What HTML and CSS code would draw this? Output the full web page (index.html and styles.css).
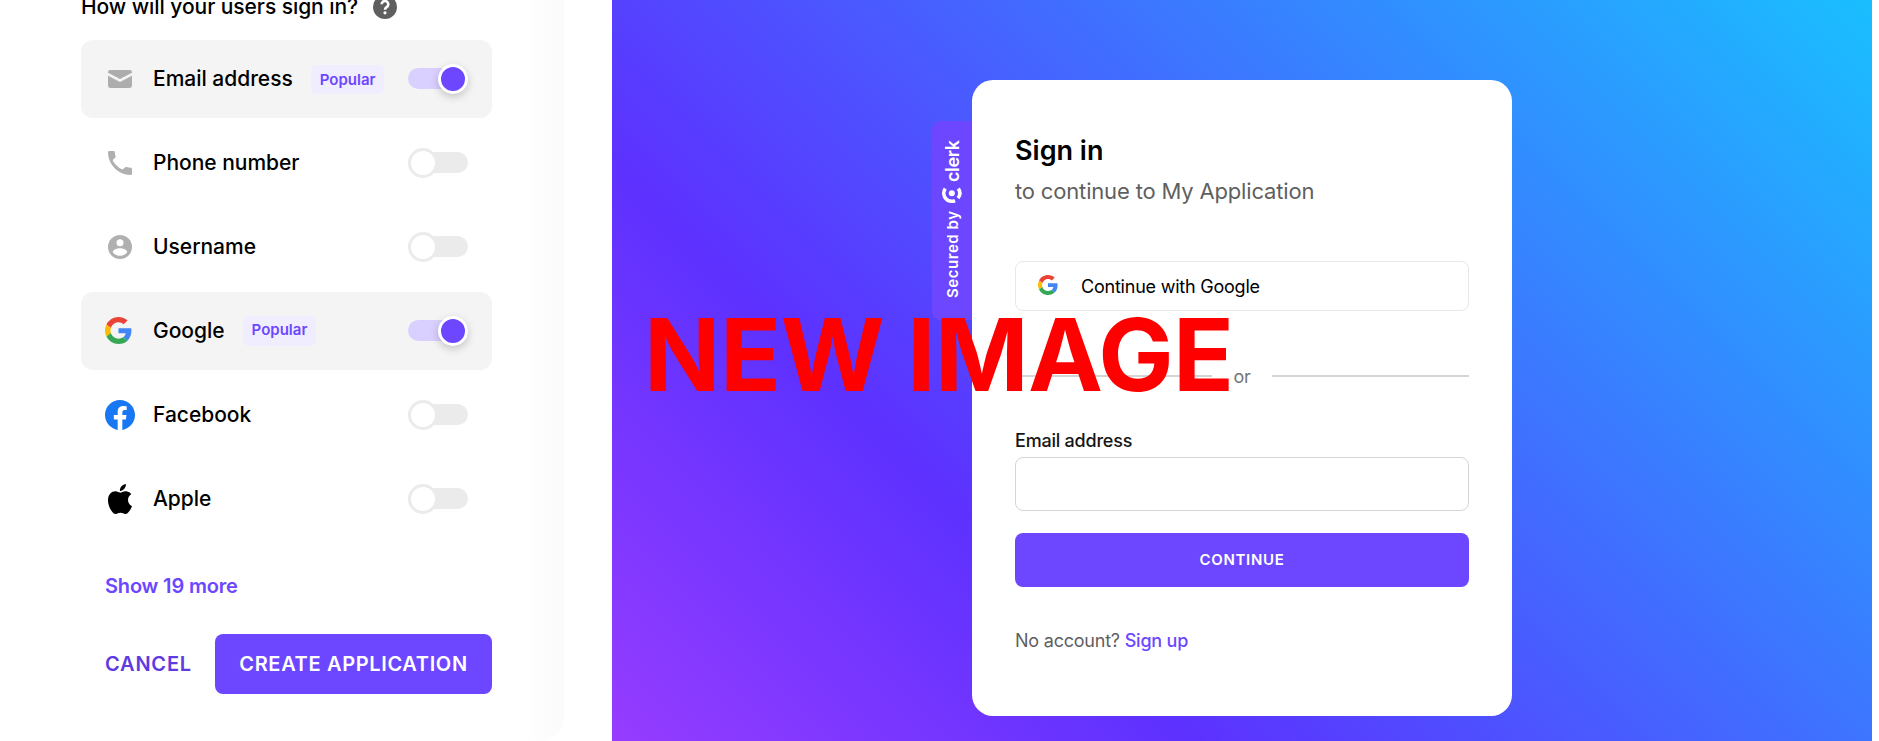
FILE: index.html
```html
<!DOCTYPE html>
<html lang="en">
<head>
<meta charset="utf-8">
<title>Create application</title>
<link rel="stylesheet" href="styles.css">
</head>
<body>
<svg width="0" height="0" class="defs">
  <symbol id="google" viewBox="0 0 48 48">
    <path fill="#EA4335" d="M24 9.5c3.54 0 6.71 1.22 9.21 3.6l6.85-6.85C35.9 2.38 30.47 0 24 0 14.62 0 6.51 5.38 2.56 13.22l7.98 6.19C12.43 13.72 17.74 9.5 24 9.5z"/>
    <path fill="#4285F4" d="M46.98 24.55c0-1.57-.15-3.09-.38-4.55H24v9.02h12.94c-.58 2.96-2.26 5.48-4.78 7.18l7.73 6c4.51-4.18 7.09-10.36 7.09-17.65z"/>
    <path fill="#FBBC05" d="M10.53 28.59c-.48-1.45-.76-2.99-.76-4.59s.27-3.14.76-4.59l-7.98-6.19C.92 16.46 0 20.12 0 24c0 3.88.92 7.54 2.56 10.78l7.97-6.19z"/>
    <path fill="#34A853" d="M24 48c6.48 0 11.93-2.13 15.89-5.81l-7.73-6c-2.15 1.45-4.92 2.3-8.16 2.3-6.26 0-11.57-4.22-13.47-9.91l-7.98 6.19C6.51 42.62 14.62 48 24 48z"/>
  </symbol>
</svg>
<main class="page">
  <section class="setup">
    <header class="question">
      <h2>How will your users sign in?</h2>
      <svg class="help" viewBox="0 0 24 24"><circle cx="12" cy="12" r="12" fill="#5f5f5f"/><path d="M8.700 9.200a3.300 3.300 0 1 1 5 2.800c-1 .7-1.700 1.100-1.700 2.700" fill="none" stroke="#fff" stroke-width="2.600"/><circle cx="12" cy="17.800" r="1.600" fill="#fff"/></svg>
    </header>
    <ul class="options">
      <li class="option on">
        <svg class="icon" viewBox="0 0 30 30" fill="#adadad"><path d="M3 8.200C3 6.900 4.100 6 5.400 6h19.200C25.900 6 27 6.900 27 8.200v.6l-12 6.200L3 8.800zM3 11.700l12 6.300 12-6.300v9.900c0 1.300-1.100 2.400-2.400 2.400H5.400C4.100 24 3 22.900 3 21.600z"/></svg>
        <span class="name">Email address</span><span class="badge">Popular</span><i class="toggle"></i>
      </li>
      <li class="option">
        <svg class="icon" viewBox="0 0 30 30" fill="#b0b0b0"><path d="M4.300 3h4.200c.7 0 1.200.5 1.300 1.200.1 1.500.3 2.700.8 4 .2.600.1 1.100-.3 1.500L7.600 12c1.700 3.900 5.800 7.900 9.900 9.600l2.800-2.300c.4-.4 1-.5 1.500-.3 1.300.4 2.600.7 4 .8.7 0 1.200.6 1.200 1.300v4.600c0 .7-.6 1.300-1.300 1.300C13.300 27 3 16.500 3 4.300 3 3.600 3.600 3 4.300 3z"/></svg>
        <span class="name">Phone number</span><i class="toggle"></i>
      </li>
      <li class="option">
        <svg class="icon" viewBox="0 0 30 30"><circle cx="15" cy="15" r="12" fill="#b0b0b0"/><circle cx="15" cy="10.800" r="3.500" fill="#fff"/><path d="M7.800 20.300c0-2.600 4.500-4 7.200-4s7.200 1.400 7.200 4c-1.500 2.200-4.200 3.500-7.200 3.500s-5.700-1.300-7.200-3.500z" fill="#fff"/></svg>
        <span class="name">Username</span><i class="toggle"></i>
      </li>
      <li class="option on">
        <svg class="icon google"><use href="#google"/></svg>
        <span class="name">Google</span><span class="badge raised">Popular</span><i class="toggle"></i>
      </li>
      <li class="option">
        <svg class="icon" viewBox="0 0 24 24" fill="#1877f2"><path d="M24 12.073c0-6.627-5.373-12-12-12s-12 5.373-12 12c0 5.990 4.388 10.954 10.125 11.854v-8.385H7.078v-3.470h3.047V9.430c0-3.007 1.792-4.669 4.533-4.669 1.312 0 2.686.235 2.686.235v2.953H15.830c-1.491 0-1.956.925-1.956 1.874v2.250h3.328l-.532 3.470h-2.796v8.385C19.612 23.027 24 18.062 24 12.073z"/></svg>
        <span class="name">Facebook</span><i class="toggle"></i>
      </li>
      <li class="option">
        <svg class="icon apple" viewBox="0 0 814 1000" preserveAspectRatio="none"><path d="M788.100 340.900c-5.800 4.500-108.200 62.200-108.200 190.500 0 148.400 130.300 200.900 134.200 202.200-.6 3.200-20.700 71.900-68.700 141.900-42.800 61.600-87.500 123.100-155.500 123.100s-85.500-39.500-164-39.500c-76.500 0-103.700 40.800-165.900 40.800s-105.600-57-155.500-127C46.700 790.700 0 663 0 541.800c0-194.400 126.400-297.500 250.800-297.500 66.100 0 121.200 43.400 162.700 43.400 39.500 0 101.100-46 176.300-46 28.500 0 130.900 2.600 198.300 99.200zm-234-181.500c31.100-36.900 53.100-88.100 53.100-139.300 0-7.100-.6-14.300-1.900-20.100-50.600 1.900-110.800 33.700-147.100 75.800-28.500 32.400-55.100 83.600-55.100 135.500 0 7.800 1.300 15.600 1.900 18.100 3.200.6 8.400 1.300 13.600 1.300 45.400 0 102.500-30.400 135.500-71.300z"/></svg>
        <span class="name">Apple</span><i class="toggle"></i>
      </li>
    </ul>
    <a class="more">Show 19 more</a>
    <footer class="actions"><a class="cancel">CANCEL</a><a class="create">CREATE APPLICATION</a></footer>
  </section>
  <section class="preview">
    <div class="secured"><span>Secured by</span><svg class="mark" viewBox="0 0 20 17"><circle cx="9.800" cy="6.300" r="3" fill="#fff"/><path d="M3.300 1.600A8 8 0 0 0 13 13.600" fill="none" stroke="#fff" stroke-width="3.600"/><path d="M16.300 1.600A8 8 0 0 1 16 11.200" fill="none" stroke="#fff" stroke-width="3.600"/></svg><span class="wordmark">clerk</span></div>
    <div class="card">
      <h1>Sign in</h1>
      <p class="sub">to continue to My Application</p>
      <div class="social"><svg class="g"><use href="#google"/></svg><span>Continue with Google</span></div>
      <div class="or"><span>or</span></div>
      <label for="email">Email address</label>
      <input id="email" class="field" type="text">
      <div class="continue">CONTINUE</div>
      <p class="signup">No account? <a>Sign up</a></p>
    </div>
    <div class="overlay">NEW IMAGE</div>
  </section>
</main>
</body>
</html>
```
FILE: styles.css
```css
*, *::before, *::after { box-sizing: border-box; }
body { margin: 0; height: 741px; overflow: hidden; background: #fff; font-family: Inter, sans-serif; color: #000; }
h1, h2, p, ul { margin: 0; padding: 0; }
.defs { position: absolute; }
.page { display: flex; height: 741px; padding-right: 7px; }

.setup { width: 564px; margin-right: 48px; padding: 0 72px 0 81px; border-bottom-right-radius: 24px; background: linear-gradient(to right, #fff 528px, #fdfdfd 540px, #fbfbfb 564px); }
.question { display: flex; align-items: center; height: 14px; margin-bottom: 26px; }
.question h2 { font-size: 21px; line-height: 28px; font-weight: 500; letter-spacing: -.06px; white-space: nowrap; }
.help { width: 24px; height: 24px; margin-left: 15px; flex: none; }
.options { display: grid; gap: 6px; list-style: none; }
.option { display: flex; align-items: center; height: 78px; padding: 0 24px; border-radius: 12px; }
.option.on { background: #f4f4f4; }
.icon { width: 30px; height: 30px; margin-right: 18px; flex: none; }
.icon.google { width: 27px; height: 27px; margin: 0 21px 2px 0; }
.icon.apple { width: 24px; margin: 0 21px 0 3px; }
.name { font-size: 21px; line-height: 30px; font-weight: 500; letter-spacing: -.02px; white-space: nowrap; }
.badge { height: 29px; margin-left: 18px; padding: 0 9px; border-radius: 6px; background: #f0edff; color: #6c47ff; font-size: 15px; line-height: 29px; font-weight: 600; }
.badge.raised { height: 30px; line-height: 28px; }
.toggle { position: relative; flex: none; width: 60px; height: 21px; margin: 0 0 1px auto; border-radius: 11px; background: #ebebeb; }
.toggle::after { content: ""; position: absolute; left: 0; top: -4px; width: 30px; height: 30px; border: 3px solid #ebebeb; border-radius: 50%; background: #fff; }
.on .toggle { background: #d9d0ff; }
.on .toggle::after { left: 30px; border-color: #fff; background: #6c47ff; box-shadow: 0 3px 8px rgba(0, 0, 0, .2); }
.more { display: block; margin: 33px 24px 0; color: #6c47ff; font-size: 20px; line-height: 30px; font-weight: 600; letter-spacing: -.17px; }
.actions { display: flex; align-items: center; justify-content: space-between; height: 60px; margin-top: 33px; padding-left: 24px; font-size: 20px; font-weight: 600; letter-spacing: .8px; }
.cancel { color: #5e3be1; }
.create { width: 277px; height: 60px; border-radius: 8px; background: #6c47ff; color: #fff; line-height: 60px; letter-spacing: .66px; text-align: center; white-space: nowrap; }

.preview { position: relative; flex: 1; display: flex; align-items: flex-start; padding: 80px 0 0 320px; background: linear-gradient(45deg, #963cff 0%, #5d31ff 29%, #1abfff 100%); }
.secured { display: flex; align-items: center; gap: 6px; width: 40px; height: 199px; margin-top: 41px; padding: 22px 0; border-radius: 0 8px 8px 0; background: #6c47ff; color: #fff; writing-mode: vertical-rl; transform: rotate(180deg); font-size: 15px; font-weight: 600; letter-spacing: .55px; white-space: nowrap; }
.mark { flex: none; width: 20px; height: 17px; transform: rotate(180deg); }
.wordmark { margin-top: -1px; font-size: 18px; font-weight: 600; letter-spacing: -.4px; }
.card { width: 540px; height: 636px; padding: 52px 43px 0; border-radius: 21px; background: #fff; }
.card h1 { font-size: 27px; line-height: 38px; font-weight: 600; }
.sub { margin-top: 5px; color: #5f5f5f; font-size: 22px; line-height: 32px; letter-spacing: -.17px; white-space: nowrap; }
.social { display: flex; align-items: center; height: 50px; margin-top: 54px; padding-left: 22px; border: 1px solid #e8e8e8; border-radius: 8px; font-size: 18px; letter-spacing: -.22px; }
.g { width: 20px; height: 20px; margin: 0 23px 3px 0; }
.or { display: flex; align-items: center; gap: 21.500px; height: 28px; margin-top: 51px; color: #757575; font-size: 18px; letter-spacing: -.2px; }
.or::before, .or::after { content: ""; flex: 1; height: 2px; background: #d4d4d4; }
.card label { display: block; margin-top: 38px; color: #151515; font-size: 18px; line-height: 26px; font-weight: 500; letter-spacing: -.22px; }
.field { display: block; width: 454px; height: 54px; margin-top: 3px; border: 1px solid #d6d6d6; border-radius: 8px; background: #fff; }
.continue { height: 54px; margin-top: 22px; border-radius: 8px; background: #6c47ff; color: #fff; font-size: 15px; line-height: 54px; font-weight: 600; letter-spacing: .7px; text-align: center; }
.signup { margin-top: 41px; color: #5f5f5f; font-size: 18px; line-height: 26px; letter-spacing: -.22px; }
.signup a { color: #6c47ff; font-weight: 500; }
.overlay { position: absolute; left: 32px; top: 294px; color: #f00; font-size: 100.500px; line-height: 122px; font-weight: 700; letter-spacing: -.6px; white-space: nowrap; }
```
